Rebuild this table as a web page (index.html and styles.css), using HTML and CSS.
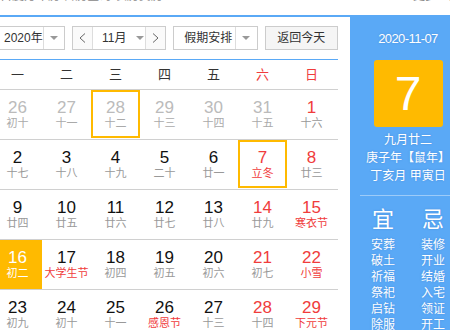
FILE: index.html
```html
<!DOCTYPE html>
<html lang="zh-CN">
<head>
<meta charset="utf-8">
<title>万年历</title>
<link rel="stylesheet" href="styles.css">
</head>
<body>
<div class="top">
  <span class="crumb">百度万年历 日历查询 农历黄历</span>
  <span class="crumb crumb-r">更多工具</span>
</div>
<div class="main">
  <div class="cal">
    <div class="toolbar">
      <div class="sel sel-year"><span class="sel-text">2020年</span><span class="sel-arrow"><i class="tri"></i></span></div>
      <div class="month">
        <span class="nav"><svg width="7" height="10" viewBox="0 0 7 10"><polyline points="6,0.5 1,5 6,9.5" fill="none" stroke="#666" stroke-width="1"/></svg></span>
        <span class="month-mid"><span class="month-text">11月</span><i class="tri"></i></span>
        <span class="nav"><svg width="7" height="10" viewBox="0 0 7 10"><polyline points="1,0.5 6,5 1,9.5" fill="none" stroke="#666" stroke-width="1"/></svg></span>
      </div>
      <div class="sel sel-hol"><span class="sel-text">假期安排</span><span class="sel-arrow"><i class="tri"></i></span></div>
      <div class="today-btn">返回今天</div>
    </div>
    <div class="week">
      <span>一</span><span>二</span><span>三</span><span>四</span><span>五</span><span class="we">六</span><span class="we">日</span>
    </div>
    <div class="row">
      <div class="cell other"><div class="n">26</div><div class="l">初十</div></div>
      <div class="cell other"><div class="n">27</div><div class="l">十一</div></div>
      <div class="cell other boxed"><div class="n">28</div><div class="l">十二</div></div>
      <div class="cell other"><div class="n">29</div><div class="l">十三</div></div>
      <div class="cell other"><div class="n">30</div><div class="l">十四</div></div>
      <div class="cell other"><div class="n">31</div><div class="l">十五</div></div>
      <div class="cell wk"><div class="n">1</div><div class="l">十六</div></div>
    </div>
    <div class="row">
      <div class="cell"><div class="n">2</div><div class="l">十七</div></div>
      <div class="cell"><div class="n">3</div><div class="l">十八</div></div>
      <div class="cell"><div class="n">4</div><div class="l">十九</div></div>
      <div class="cell"><div class="n">5</div><div class="l">二十</div></div>
      <div class="cell"><div class="n">6</div><div class="l">廿一</div></div>
      <div class="cell wk boxed"><div class="n">7</div><div class="l fest">立冬</div></div>
      <div class="cell wk"><div class="n">8</div><div class="l">廿三</div></div>
    </div>
    <div class="row">
      <div class="cell"><div class="n">9</div><div class="l">廿四</div></div>
      <div class="cell"><div class="n">10</div><div class="l">廿五</div></div>
      <div class="cell"><div class="n">11</div><div class="l">廿六</div></div>
      <div class="cell"><div class="n">12</div><div class="l">廿七</div></div>
      <div class="cell"><div class="n">13</div><div class="l">廿八</div></div>
      <div class="cell wk"><div class="n">14</div><div class="l">廿九</div></div>
      <div class="cell wk"><div class="n">15</div><div class="l fest">寒衣节</div></div>
    </div>
    <div class="row">
      <div class="cell today"><div class="n">16</div><div class="l">初二</div></div>
      <div class="cell"><div class="n">17</div><div class="l fest">大学生节</div></div>
      <div class="cell"><div class="n">18</div><div class="l">初四</div></div>
      <div class="cell"><div class="n">19</div><div class="l">初五</div></div>
      <div class="cell"><div class="n">20</div><div class="l">初六</div></div>
      <div class="cell wk"><div class="n">21</div><div class="l">初七</div></div>
      <div class="cell wk"><div class="n">22</div><div class="l fest">小雪</div></div>
    </div>
    <div class="row">
      <div class="cell"><div class="n">23</div><div class="l">初九</div></div>
      <div class="cell"><div class="n">24</div><div class="l">初十</div></div>
      <div class="cell"><div class="n">25</div><div class="l">十一</div></div>
      <div class="cell"><div class="n">26</div><div class="l fest">感恩节</div></div>
      <div class="cell"><div class="n">27</div><div class="l">十三</div></div>
      <div class="cell wk"><div class="n">28</div><div class="l">十四</div></div>
      <div class="cell wk"><div class="n">29</div><div class="l fest">下元节</div></div>
    </div>
  </div>
  <div class="side">
    <div class="side-date">2020-11-07</div>
    <div class="big">7</div>
    <div class="lunar">
      <div>九月廿二</div>
      <div>庚子年【鼠年】</div>
      <div>丁亥月 甲寅日</div>
    </div>
    <div class="hr"></div>
    <div class="yj">
      <div class="yj-col">
        <div class="yj-h">宜</div>
        <ul class="yj-list"><li>安葬</li><li>破土</li><li>祈福</li><li>祭祀</li><li>启钻</li><li>除服</li></ul>
      </div>
      <div class="yj-col">
        <div class="yj-h">忌</div>
        <ul class="yj-list"><li>装修</li><li>开业</li><li>结婚</li><li>入宅</li><li>领证</li><li>开工</li></ul>
      </div>
    </div>
  </div>
</div>
</body>
</html>
```

FILE: styles.css
```css
html, body {
  margin: 0;
  padding: 0;
}
body {
  width: 450px;
  height: 330px;
  overflow: hidden;
  background: #fff;
  font-family: "Liberation Sans", "Noto Sans CJK SC", sans-serif;
  color: #222;
}
.top {
  height: 15px;
  overflow: hidden;
  border-bottom: 2px solid #5aa9f6;
  display: flex;
  justify-content: space-between;
}
.crumb {
  display: block;
  margin-top: -11px;
  font-size: 12px;
  line-height: 14px;
  color: #888;
  white-space: nowrap;
}
.crumb-r {
  width: 37px;
  overflow: hidden;
}
.main {
  display: flex;
  align-items: flex-start;
}
.cal {
  flex: none;
  width: 345px;
  margin-left: -7px;
}
.toolbar {
  box-sizing: border-box;
  height: 43px;
  padding-top: 9px;
  border-bottom: 1px solid #5aa9f6;
  display: flex;
  align-items: flex-start;
  gap: 7px;
}
.sel {
  box-sizing: border-box;
  height: 24px;
  border: 1px solid #ccc;
  background: #fff;
  display: flex;
  font-size: 12px;
  color: #333;
}
.sel-text {
  flex: 1;
  padding-left: 10px;
  line-height: 22px;
  white-space: nowrap;
}
.sel-arrow {
  width: 21px;
  border-left: 1px solid #ddd;
  display: flex;
  align-items: center;
  justify-content: center;
}
.tri {
  display: block;
  width: 0;
  height: 0;
  border-left: 4px solid transparent;
  border-right: 4px solid transparent;
  border-top: 4px solid #999;
}
.sel-year { width: 72px; }
.sel-hol { width: 85px; }
.month {
  box-sizing: border-box;
  width: 95px;
  height: 24px;
  border: 1px solid #ccc;
  display: flex;
  font-size: 12px;
  color: #333;
}
.nav {
  width: 19px;
  background: #fafafa;
  display: flex;
  align-items: center;
  justify-content: center;
}
.month-mid {
  flex: 1;
  border-left: 1px solid #ddd;
  border-right: 1px solid #ddd;
  display: flex;
  align-items: center;
  padding-left: 9px;
  gap: 10px;
}
.month-text {
  line-height: 22px;
}
.today-btn {
  box-sizing: border-box;
  width: 74px;
  height: 24px;
  border: 1px solid #ccc;
  background: #f5f5f5;
  font-size: 12px;
  line-height: 22px;
  text-align: center;
  color: #333;
}
.week {
  box-sizing: border-box;
  height: 30px;
  border-bottom: 1px solid #d0d0d0;
  display: grid;
  grid-template-columns: repeat(7, 49px);
  font-size: 13px;
  line-height: 29px;
  text-align: center;
  color: #333;
}
.week .we { color: #f03c3c; }
.row {
  box-sizing: border-box;
  height: 50px;
  border-bottom: 1px solid #d0d0d0;
  display: grid;
  grid-template-columns: repeat(7, 49px);
}
.cell {
  position: relative;
  height: 49px;
  box-sizing: border-box;
  padding-top: 9px;
  text-align: center;
}
.n {
  font-size: 17px;
  line-height: 18px;
  color: #111;
}
.l {
  font-size: 11px;
  line-height: 12px;
  color: #999;
  white-space: nowrap;
}
.cell.other .n { color: #bbb; }
.cell.other .l { color: #aaa; }
.cell.wk .n { color: #f03c3c; }
.l.fest { color: #f03c3c; }
.cell.today { background: #ffba00; }
.cell.today .n, .cell.today .l { color: #fff; }
.cell.boxed::after {
  content: "";
  position: absolute;
  left: 0;
  top: 0;
  width: 49px;
  height: 48px;
  box-sizing: border-box;
  border: 2px solid #ffba00;
}
.side {
  flex: none;
  width: 116px;
  height: 330px;
  margin-left: 12px;
  background: #5aa9f6;
  color: #fff;
  text-align: center;
  text-shadow: 0 0 2px rgba(40, 90, 170, 0.35);
}
.side-date {
  height: 43px;
  line-height: 43px;
  font-size: 13px;
  letter-spacing: -0.6px;
}
.big {
  width: 69px;
  height: 67px;
  margin: 0 auto;
  background: #ffba00;
  border-radius: 3px;
  font-size: 48px;
  line-height: 67px;
  text-shadow: none;
}
.lunar {
  margin-top: 4px;
  font-size: 12px;
  line-height: 18px;
  white-space: nowrap;
}
.hr {
  width: 97px;
  height: 1px;
  margin: 10px auto 0;
  background: rgba(255, 255, 255, 0.4);
}
.yj {
  display: flex;
  justify-content: center;
  padding-top: 10px;
}
.yj-col {
  width: 50px;
}
.yj-h {
  font-size: 22px;
  line-height: 28px;
}
.yj-list {
  list-style: none;
  margin: 3px 0 0;
  padding: 0;
  font-size: 12px;
  line-height: 16px;
}
```
